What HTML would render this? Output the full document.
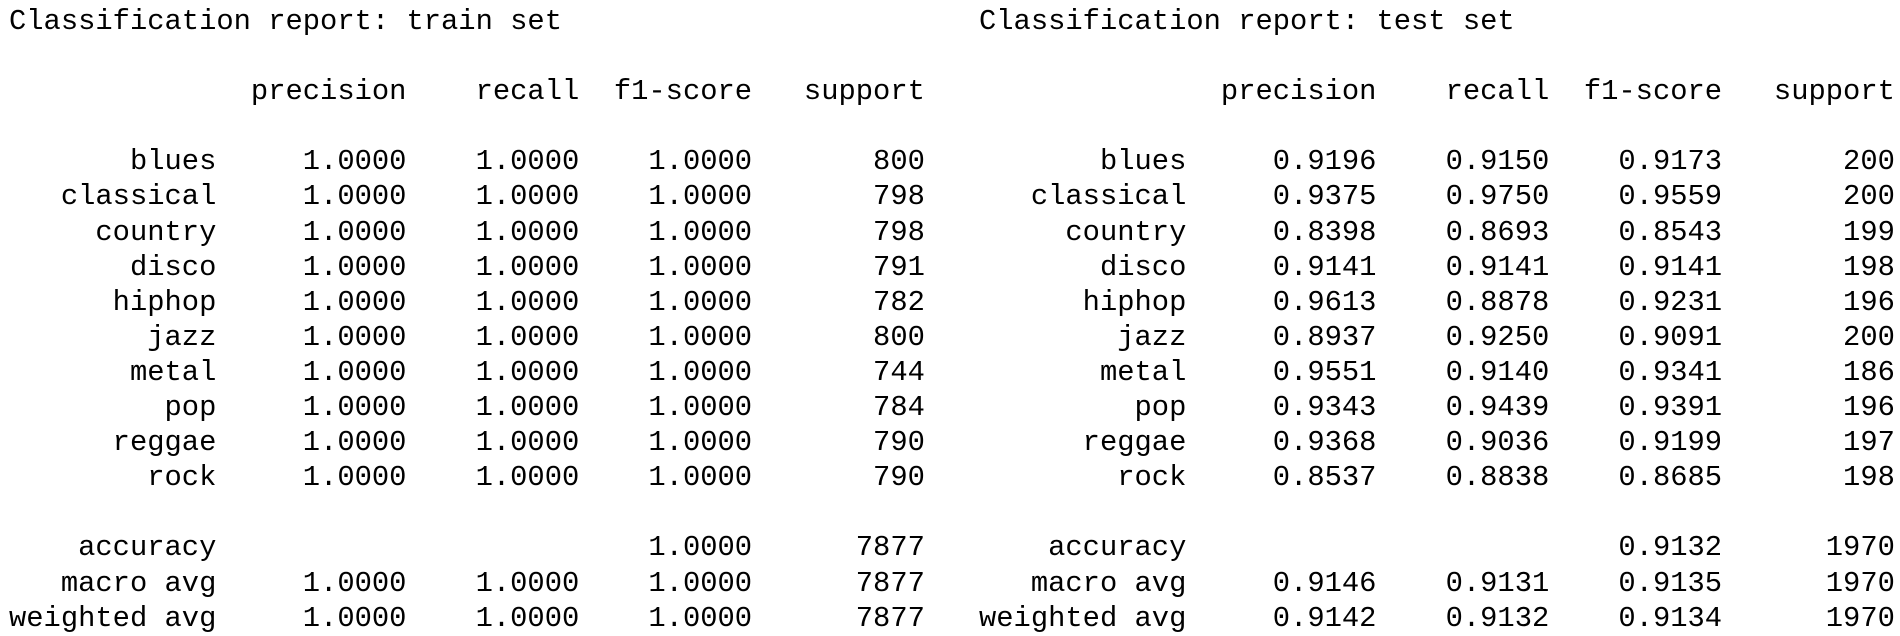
<!DOCTYPE html>
<html><head><meta charset="utf-8"><style>
html,body{margin:0;padding:0;background:#fff;width:1900px;height:636px;overflow:hidden}
pre{position:absolute;top:4px;margin:0;font-family:"Liberation Mono",monospace;font-size:28.8px;line-height:35.1px;color:#000;letter-spacing:0}
#a{left:9px}#b{left:979px}
</style></head><body>
<pre id="a">Classification report: train set

              precision    recall  f1-score   support

       blues     1.0000    1.0000    1.0000       800
   classical     1.0000    1.0000    1.0000       798
     country     1.0000    1.0000    1.0000       798
       disco     1.0000    1.0000    1.0000       791
      hiphop     1.0000    1.0000    1.0000       782
        jazz     1.0000    1.0000    1.0000       800
       metal     1.0000    1.0000    1.0000       744
         pop     1.0000    1.0000    1.0000       784
      reggae     1.0000    1.0000    1.0000       790
        rock     1.0000    1.0000    1.0000       790

    accuracy                         1.0000      7877
   macro avg     1.0000    1.0000    1.0000      7877
weighted avg     1.0000    1.0000    1.0000      7877</pre>
<pre id="b">Classification report: test set

              precision    recall  f1-score   support

       blues     0.9196    0.9150    0.9173       200
   classical     0.9375    0.9750    0.9559       200
     country     0.8398    0.8693    0.8543       199
       disco     0.9141    0.9141    0.9141       198
      hiphop     0.9613    0.8878    0.9231       196
        jazz     0.8937    0.9250    0.9091       200
       metal     0.9551    0.9140    0.9341       186
         pop     0.9343    0.9439    0.9391       196
      reggae     0.9368    0.9036    0.9199       197
        rock     0.8537    0.8838    0.8685       198

    accuracy                         0.9132      1970
   macro avg     0.9146    0.9131    0.9135      1970
weighted avg     0.9142    0.9132    0.9134      1970</pre>
</body></html>
